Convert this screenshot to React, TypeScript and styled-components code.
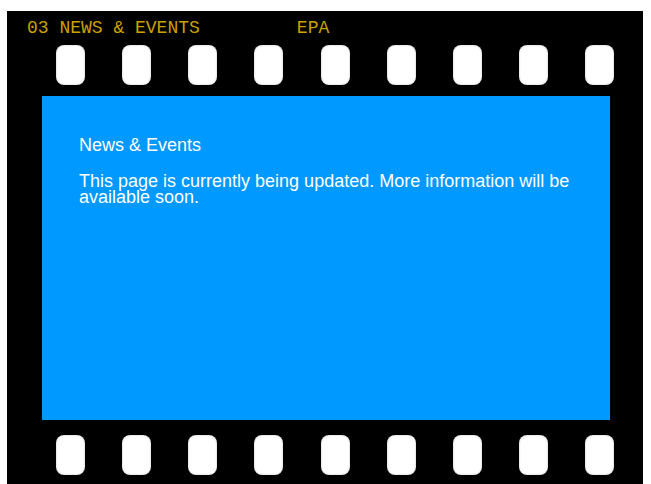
import * as React from "react";
import styled, { createGlobalStyle } from "styled-components";

const GlobalStyle = createGlobalStyle`
  html, body {
    margin: 0;
    padding: 0;
    background: #ffffff;
    overflow: hidden;
  }
`;

const FilmStrip = styled.div`
  margin: 11px 0 0 7px;
  width: 636px;
  height: 480px;
  background: #000000;
  display: flex;
  flex-direction: column;
`;

const Header = styled.div`
  display: flex;
  padding: 8px 0 0 20px;
  height: 18px;
  font-family: "Liberation Mono", "Courier New", monospace;
  font-size: 18px;
  line-height: 18px;
  color: #c9a100;
  white-space: pre;
`;

const Tag = styled.span`
  margin-left: 97px;
`;

const SprocketRow = styled.div<{ $gap: number }>`
  display: flex;
  justify-content: space-between;
  padding: 0 29px 0 49px;
  margin-top: ${(p) => p.$gap}px;
`;

const Hole = styled.div`
  width: 29px;
  height: 40px;
  border-radius: 8px;
  background: #ffffff;
  box-shadow: inset 0 0 2px rgba(0, 0, 0, 0.3);
`;

const Screen = styled.div`
  margin: 11px 0 0 35px;
  width: 568px;
  height: 324px;
  box-sizing: border-box;
  padding: 41px 37px 0 37px;
  background: #0099ff;
  color: #ffffff;
  font-family: "Liberation Sans", Arial, sans-serif;
  font-size: 18px;
  line-height: 16px;
`;

const Title = styled.h1`
  margin: 0;
  font-size: 18px;
  font-weight: normal;
  line-height: 16px;
`;

const Body = styled.p`
  margin: 20px 0 0 0;
`;

const Sprockets = ({ gap }: { gap: number }) => (
  <SprocketRow $gap={gap}>
    {Array.from({ length: 9 }).map((_, i) => (
      <Hole key={i} />
    ))}
  </SprocketRow>
);

export default function App() {
  return (
    <>
      <GlobalStyle />
      <FilmStrip>
        <Header>
          <span>03 NEWS &amp; EVENTS</span>
          <Tag>EPA</Tag>
        </Header>
        <Sprockets gap={8} />
        <Screen>
          <Title>News &amp; Events</Title>
          <Body>
            This page is currently being updated. More information will be
            available soon.
          </Body>
        </Screen>
        <Sprockets gap={15} />
      </FilmStrip>
    </>
  );
}
